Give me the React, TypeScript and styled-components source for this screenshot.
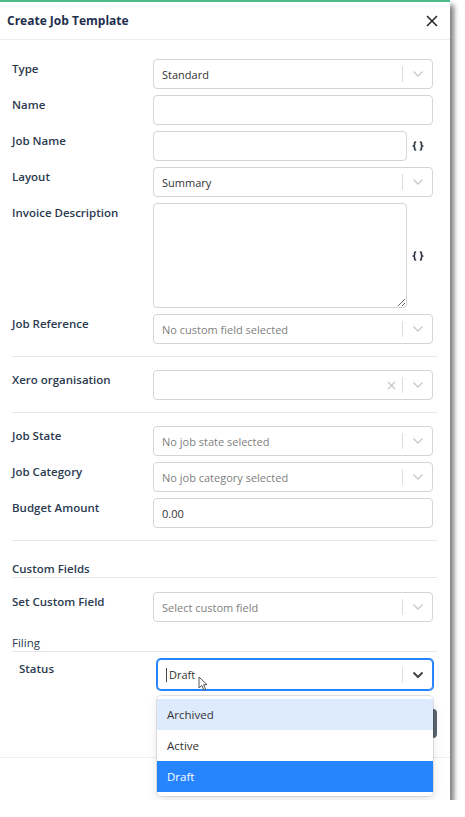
import * as React from 'react';
import styled, { createGlobalStyle } from 'styled-components';

const GlobalStyle = createGlobalStyle`
  html, body { margin: 0; padding: 0; background: #fff; }
  body { font-family: "Open Sans", "Liberation Sans", sans-serif; }
  * { box-sizing: border-box; }
`;

const Modal = styled.div`
  width: 450px;
  height: 800px;
  background: #fff;
  border-top: 2px solid #4dbb87;
  box-shadow: 4px 5px 5px rgba(0, 0, 0, 0.5);
  display: flex;
  flex-direction: column;
`;

const Header = styled.div`
  height: 38px;
  border-bottom: 1px solid #eeeeee;
  display: flex;
  align-items: center;
  justify-content: space-between;
  padding: 0 10px 0 7px;
`;

const Title = styled.div`
  font-size: 12px;
  font-weight: 700;
  color: #1e2f4d;
`;

const CloseButton = styled.button`
  border: 0;
  background: none;
  padding: 0;
  width: 16px;
  height: 16px;
  display: flex;
  align-items: center;
  justify-content: center;
`;

// flex column so the row and divider margins add up instead of collapsing
const Body = styled.div`
  flex: 1;
  display: flex;
  flex-direction: column;
  padding: 19px 13px 0 12px;
`;

const Row = styled.div<{ $labelWidth?: number; $indent?: number }>`
  display: grid;
  grid-template-columns: ${p => p.$labelWidth ?? 141}px 1fr;
  padding-left: ${p => p.$indent ?? 0}px;
  padding-right: 4px;
  margin-bottom: 6px;
`;

const Label = styled.div`
  font-size: 11.5px;
  font-weight: 600;
  color: #2b3a4f;
  line-height: 16px;
  padding-top: 2px;
`;

const Control = styled.div<{ $focused?: boolean }>`
  position: relative;
  height: ${p => (p.$focused ? 31 : 30)}px;
  border: 1px solid ${p => (p.$focused ? '#2684ff' : '#d4d4d4')};
  box-shadow: ${p => (p.$focused ? '0 0 0 1px #2684ff' : 'none')};
  border-radius: 4px;
  background: #fff;
  display: flex;
  align-items: center;
`;

const Value = styled.div<{ $placeholder?: boolean }>`
  flex: 1;
  padding-left: 8px;
  font-size: 11px;
  color: ${p => (p.$placeholder ? '#808080' : '#333333')};
  display: flex;
  align-items: center;
`;

const Indicators = styled.div`
  display: flex;
  align-items: center;
  height: 100%;
`;

const ClearIcon = styled.div`
  width: 22px;
  display: flex;
  justify-content: center;
`;

const IndicatorSep = styled.span`
  width: 1px;
  height: 16px;
  background: #dddddd;
`;

const ChevronBox = styled.div`
  width: 29px;
  display: flex;
  justify-content: center;
`;

const TextInput = styled.input`
  height: 30px;
  width: 100%;
  border: 1px solid #d4d4d4;
  border-radius: 4px;
  padding: 0 8px;
  font-family: inherit;
  font-size: 11px;
  color: #333;
  outline: none;
`;

const TextArea = styled.textarea`
  height: 105px;
  width: 254px;
  border: 1px solid #d4d4d4;
  border-radius: 4px;
  padding: 6px 8px;
  font-family: inherit;
  font-size: 11px;
  outline: none;
  resize: vertical;
  display: block;
`;

const FieldWithToken = styled.div`
  display: flex;
  align-items: center;
  ${TextInput} { width: 254px; }
`;

const TokenButton = styled.span`
  margin-left: 5px;
  display: flex;
  align-items: center;
`;

const Divider = styled.div`
  height: 1px;
  background: #e6e6e6;
  margin: 6px 0 13px;
`;

const SectionHeading = styled.div<{ $bold?: boolean; $before: number; $after: number }>`
  margin-top: ${p => p.$before}px;
  margin-bottom: ${p => p.$after}px;
  font-size: 11.5px;
  font-weight: ${p => (p.$bold ? 600 : 400)};
  color: #2b3a4f;
  line-height: 16px;
  border-bottom: 1px solid #e6e6e6;
`;

const Caret = styled.span`
  width: 1px;
  height: 14px;
  background: #444;
  margin-right: 2px;
`;

const Pointer = styled.svg`
  position: absolute;
  left: 40px;
  top: 16px;
`;

const Menu = styled.div`
  position: absolute;
  top: calc(100% + 7px);
  left: -1px;
  right: -1px;
  background: #fff;
  border-radius: 4px;
  box-shadow: 0 0 0 1px rgba(0, 0, 0, 0.1), 0 4px 11px rgba(0, 0, 0, 0.1);
  padding: 3px 0 4px;
  z-index: 2;
`;

const Option = styled.div<{ $state?: 'focused' | 'selected' }>`
  height: 31px;
  padding: 0 10px;
  display: flex;
  align-items: center;
  font-size: 11.5px;
  background: ${p =>
    p.$state === 'selected' ? '#2684ff' : p.$state === 'focused' ? '#deebff' : 'transparent'};
  color: ${p => (p.$state === 'selected' ? '#fff' : '#333')};
`;

const ActionRow = styled.div`
  display: flex;
  justify-content: flex-end;
  margin-top: 13px;
`;

const DarkButton = styled.button`
  width: 64px;
  height: 29px;
  border: 0;
  border-radius: 4px;
  background: #5b6470;
`;

const Footer = styled.div`
  height: 43px;
  border-top: 1px solid #eeeeee;
`;

function Chevron({ dark }: { dark?: boolean }) {
  return (
    <svg width="12" height="8" viewBox="0 0 12 8">
      <polyline
        points="1.5,1.5 6,6 10.5,1.5"
        fill="none"
        stroke={dark ? '#444' : '#c8c8c8'}
        strokeWidth={dark ? 2 : 1.3}
      />
    </svg>
  );
}

function Braces() {
  return (
    <svg width="12" height="10" viewBox="0 0 12 10">
      <path
        d="M4.2 1 H3.4 Q2.6 1 2.6 1.9 V3.6 Q2.6 5 1.2 5 Q2.6 5 2.6 6.4 V8.1 Q2.6 9 3.4 9 H4.2 M7.8 1 H8.6 Q9.4 1 9.4 1.9 V3.6 Q9.4 5 10.8 5 Q9.4 5 9.4 6.4 V8.1 Q9.4 9 8.6 9 H7.8"
        fill="none"
        stroke="#333b48"
        strokeWidth="1.7"
        strokeLinejoin="round"
      />
    </svg>
  );
}

function Select({ value, placeholder, clearable }: { value?: string; placeholder?: string; clearable?: boolean }) {
  return (
    <Control>
      <Value $placeholder={!value}>{value ?? placeholder}</Value>
      <Indicators>
        {clearable && (
          <ClearIcon>
            <svg width="9" height="9" viewBox="0 0 9 9">
              <path d="M1 1 L8 8 M8 1 L1 8" stroke="#c8c8c8" strokeWidth="1.3" />
            </svg>
          </ClearIcon>
        )}
        <IndicatorSep />
        <ChevronBox><Chevron /></ChevronBox>
      </Indicators>
    </Control>
  );
}

const statusOptions: Array<{ label: string; state?: 'focused' | 'selected' }> = [
  { label: 'Archived', state: 'focused' },
  { label: 'Active' },
  { label: 'Draft', state: 'selected' },
];

export default function App() {
  return (
    <>
      <GlobalStyle />
      <Modal>
        <Header>
          <Title>Create Job Template</Title>
          <CloseButton aria-label="Close">
            <svg width="12" height="12" viewBox="0 0 12 12">
              <path d="M1 1 L11 11 M11 1 L1 11" stroke="#222" strokeWidth="1.5" />
            </svg>
          </CloseButton>
        </Header>

        <Body>
          <Row><Label>Type</Label><Select value="Standard" /></Row>
          <Row><Label>Name</Label><TextInput /></Row>
          <Row>
            <Label>Job Name</Label>
            <FieldWithToken><TextInput /><TokenButton><Braces /></TokenButton></FieldWithToken>
          </Row>
          <Row><Label>Layout</Label><Select value="Summary" /></Row>
          <Row>
            <Label>Invoice Description</Label>
            <FieldWithToken><TextArea /><TokenButton><Braces /></TokenButton></FieldWithToken>
          </Row>
          <Row><Label>Job Reference</Label><Select placeholder="No custom field selected" /></Row>

          <Divider />
          <Row><Label>Xero organisation</Label><Select clearable /></Row>
          <Divider />

          <Row><Label>Job State</Label><Select placeholder="No job state selected" /></Row>
          <Row><Label>Job Category</Label><Select placeholder="No job category selected" /></Row>
          <Row><Label>Budget Amount</Label><TextInput defaultValue="0.00" /></Row>

          <Divider />
          <SectionHeading $bold $before={7} $after={14}>Custom Fields</SectionHeading>
          <Row><Label>Set Custom Field</Label><Select placeholder="Select custom field" /></Row>

          <SectionHeading $before={7} $after={7}>Filing</SectionHeading>
          <Row $labelWidth={138} $indent={7}>
            <Label>Status</Label>
            <Control $focused>
              <Value><Caret />Draft</Value>
              <Pointer width="10" height="15" viewBox="0 0 10 15">
                <path d="M1 1 L1 12 L3.8 9.4 L5.8 14 L7.6 13.2 L5.6 8.7 L9 8.7 Z" fill="#fff" stroke="#555" strokeWidth="1" />
              </Pointer>
              <Indicators>
                <IndicatorSep />
                <ChevronBox><Chevron dark /></ChevronBox>
              </Indicators>
              <Menu>
                {statusOptions.map(o => (
                  <Option key={o.label} $state={o.state}>{o.label}</Option>
                ))}
              </Menu>
            </Control>
          </Row>
          <ActionRow><DarkButton /></ActionRow>
        </Body>

        <Footer />
      </Modal>
    </>
  );
}
